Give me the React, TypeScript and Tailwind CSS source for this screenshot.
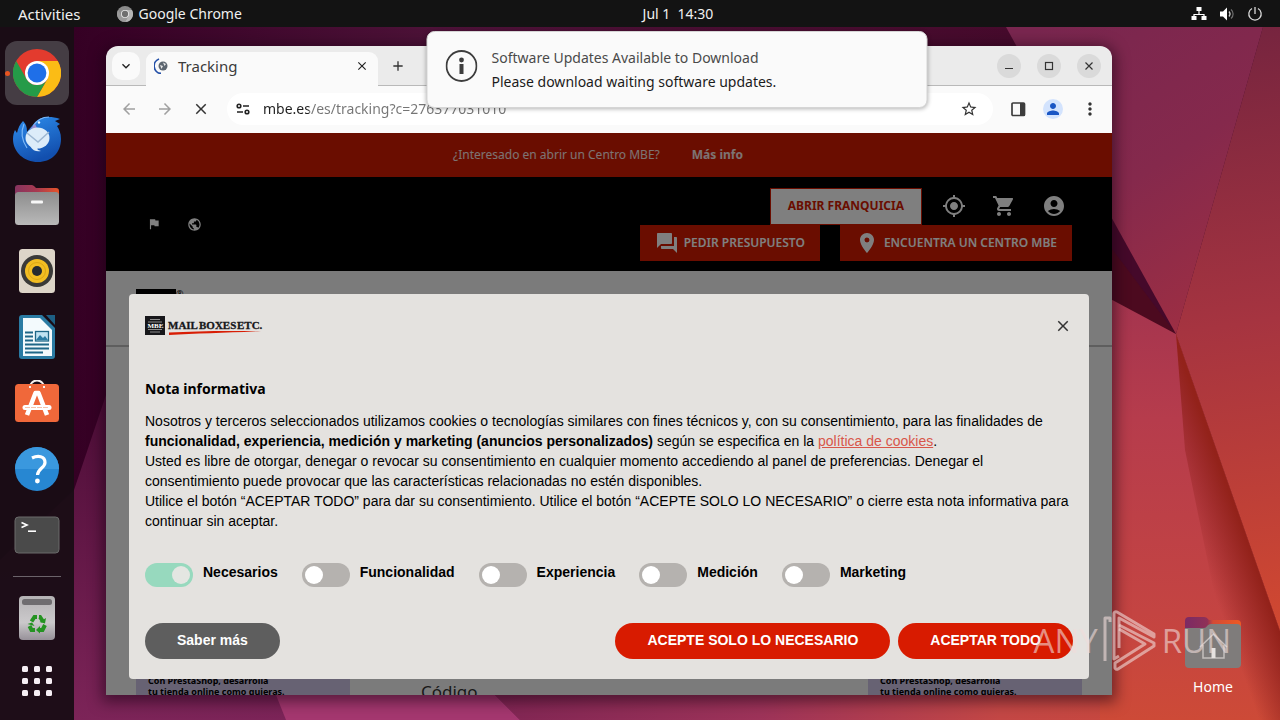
import type { ReactNode } from "react";
import {
  MdAccountCircle,
  MdAdd,
  MdArrowBack,
  MdArrowForward,
  MdClose,
  MdExpandMore,
  MdFlag,
  MdForum,
  MdMoreVert,
  MdMyLocation,
  MdPerson,
  MdPlace,
  MdPublic,
  MdShoppingCart,
  MdStarBorder,
} from "react-icons/md";

function Wallpaper() {
  return (
    <svg
      className="absolute inset-0 h-full w-full"
      viewBox="0 0 1280 720"
      preserveAspectRatio="none"
      aria-hidden="true"
    >
      <defs>
        <linearGradient id="w-top" gradientUnits="userSpaceOnUse" x1="74" y1="0" x2="1100" y2="0">
          <stop offset="0" stopColor="#350024" />
          <stop offset="0.35" stopColor="#4d1238" />
          <stop offset="1" stopColor="#45092a" />
        </linearGradient>
        <linearGradient id="w-left" gradientUnits="userSpaceOnUse" x1="0" y1="380" x2="0" y2="720">
          <stop offset="0" stopColor="#4b0c36" />
          <stop offset="1" stopColor="#7c2458" />
        </linearGradient>
        <linearGradient id="w-bottom" gradientUnits="userSpaceOnUse" x1="480" y1="0" x2="1280" y2="0">
          <stop offset="0" stopColor="#7f2553" />
          <stop offset="0.35" stopColor="#9d3359" />
          <stop offset="0.65" stopColor="#c34745" />
          <stop offset="1" stopColor="#cc4838" />
        </linearGradient>
        <linearGradient id="w-upper" gradientUnits="userSpaceOnUse" x1="1040" y1="27" x2="1230" y2="330">
          <stop offset="0" stopColor="#79264f" />
          <stop offset="0.5" stopColor="#85294c" />
          <stop offset="1" stopColor="#a02f42" />
        </linearGradient>
        <linearGradient id="w-right" gradientUnits="userSpaceOnUse" x1="1200" y1="27" x2="1290" y2="620">
          <stop offset="0" stopColor="#75243f" />
          <stop offset="0.5" stopColor="#a63440" />
          <stop offset="1" stopColor="#d04831" />
        </linearGradient>
        <linearGradient id="w-lower" gradientUnits="userSpaceOnUse" x1="0" y1="290" x2="0" y2="720">
          <stop offset="0" stopColor="#a3344f" />
          <stop offset="0.3" stopColor="#b63c4c" />
          <stop offset="0.75" stopColor="#c44442" />
          <stop offset="1" stopColor="#cd4a37" />
        </linearGradient>
        <linearGradient id="w-fold" gradientUnits="userSpaceOnUse" x1="1198" y1="548" x2="1243" y2="532">
          <stop offset="0" stopColor="#8b1f1c" stopOpacity="0" />
          <stop offset="1" stopColor="#93221a" />
        </linearGradient>
      </defs>
      <rect width="1280" height="720" fill="url(#w-top)" />
      <path d="M0 560 L74 490 L106 395 L600 300 L600 720 L0 720 Z" fill="url(#w-left)" />
      <path d="M266 670 L470 670 L520 720 L286 720 Z" fill="#a4376f" />
      <path d="M470 670 L1176 334 L1280 631 L1280 720 L520 720 Z" fill="url(#w-bottom)" />
      <path d="M1100 278 L1176 334 L1280 631 L1280 720 L1100 720 Z" fill="url(#w-lower)" />
      <path d="M1000 100 L1176 334 L1000 240 Z" fill="#4c0a1f" />
      <path d="M1006 27 L1263 27 L1176 334 Z" fill="url(#w-upper)" />
      <path d="M1263 27 L1280 27 L1280 631 L1176 334 Z" fill="url(#w-right)" />
      <path d="M1176 334 L1280 631 L1280 720 L1240 720 L1185 450 Z" fill="url(#w-fold)" />
    </svg>
  );
}

function ChromeLogo({ mono = false }: { mono?: boolean }) {
  const [red, yellow, green, blue, ring] = mono
    ? ["#8b8b8b", "#b5b5b5", "#9a9a9a", "#6f6f6f", "#e8e8e8"]
    : ["#e33b2e", "#fbbc15", "#259b48", "#1f6fe8", "#ffffff"];
  return (
    <svg viewBox="0 0 48 48" className="h-full w-full" aria-hidden="true">
      <circle cx="24" cy="24" r="24" fill={red} />
      <path d="M24 12 H44.8 A24 24 0 0 1 24 48 L34.4 30 Z" fill={yellow} />
      <path d="M3.2 12 A24 24 0 0 0 24 48 L34.4 30 A12 12 0 0 1 13.6 30 Z" fill={green} />
      <circle cx="24" cy="24" r="12" fill={ring} />
      <circle cx="24" cy="24" r="9.4" fill={blue} />
    </svg>
  );
}

function MailBird() {
  return (
    <svg viewBox="0 0 48 48" className="size-12" aria-hidden="true">
      <defs>
        <linearGradient id="bird" x1="0" y1="0" x2="0.4" y2="1">
          <stop offset="0" stopColor="#2f8fee" />
          <stop offset="1" stopColor="#124fae" />
        </linearGradient>
      </defs>
      <path
        d="M10 6 C13 9 14 12 14 17 C16 14 18 12 20 10 C25 2 35 0 47 4 L42 6 L47 9 L44 11 C46 14 48 18 48 24 C48 38 38 47 25 47 C11 47 0 37 0 24 C0 20 1 17 2 15 L4 18 C5 13 7 9 10 6 Z"
        fill="url(#bird)"
      />
      <path d="M11 9 C8 16 8 24 14 33 M20 11 C24 5 30 2 36 2" stroke="#7cb8f7" strokeWidth="1.2" fill="none" />
      <circle cx="26" cy="7.5" r="1.2" fill="#e7f3ff" />
      <path d="M17 14 L22 9 L24 13 Z" fill="#9b8fd6" />
      <ellipse cx="24.5" cy="23" rx="12" ry="10.5" fill="#dcecf9" />
      <path d="M14 18 L25 27 L36 17" fill="none" stroke="#9db7d2" strokeWidth="1.5" />
      <path d="M17 31 C20 36 24 37 28 36 C24 35 24 34 25 32 Z" fill="#dcecf9" />
    </svg>
  );
}

function FilesIcon() {
  return (
    <svg viewBox="0 0 46 42" className="h-[42px] w-[46px]" aria-hidden="true">
      <defs>
        <linearGradient id="folder-back" x1="0" y1="0" x2="1" y2="0">
          <stop offset="0" stopColor="#86345f" />
          <stop offset="0.5" stopColor="#a83a50" />
          <stop offset="1" stopColor="#e6542a" />
        </linearGradient>
        <linearGradient id="folder-front" x1="0" y1="0" x2="0" y2="1">
          <stop offset="0" stopColor="#8d8d8d" />
          <stop offset="1" stopColor="#b9b9b9" />
        </linearGradient>
      </defs>
      <path d="M1 4 a3 3 0 0 1 3-3 h13 a4 4 0 0 1 3 1 l2 2 h20 a3 3 0 0 1 3 3 v14 H1 Z" fill="url(#folder-back)" />
      <rect x="1" y="8" width="44" height="33" rx="3.5" fill="url(#folder-front)" />
      <rect x="17" y="16.5" width="12" height="3" rx="1" fill="#f7f7f7" />
    </svg>
  );
}

function SpeakerIcon() {
  return (
    <svg viewBox="0 0 38 46" className="h-[46px] w-[38px]" aria-hidden="true">
      <rect x="1" y="1" width="36" height="44" rx="3.5" fill="#ddd5c8" />
      <circle cx="19" cy="23" r="16" fill="#3a3a38" />
      <circle cx="19" cy="23" r="12" fill="#f2bd22" />
      <circle cx="19" cy="23" r="8.5" fill="none" stroke="#dba714" strokeWidth="1" />
      <circle cx="19" cy="23" r="5" fill="#252a30" />
    </svg>
  );
}

function WriterIcon() {
  return (
    <svg viewBox="0 0 38 46" className="h-[46px] w-[38px]" aria-hidden="true">
      <path d="M4 1 H24 L37 14 V42 a3 3 0 0 1 -3 3 H4 a3 3 0 0 1 -3 -3 V4 a3 3 0 0 1 3-3 Z" fill="#2a7ba3" />
      <path d="M28 1 H37 V11 Z" fill="#1d5f83" />
      <path d="M5 4 H22 L34 16 V42 H5 Z" fill="#f3fafd" />
      <path d="M7 18.5 H15 M7 22.5 H15 M7 26.5 H15 M7 30.5 H31 M7 34.5 H31 M7 38.5 H25" stroke="#1f6788" strokeWidth="1.8" />
      <rect x="17.5" y="17.5" width="13" height="9.5" fill="#bfe2f2" stroke="#1f6788" strokeWidth="1.3" />
      <path d="M18 26 L22 21 L25 24 L27 22 L30 26 Z" fill="#2a7ba3" />
    </svg>
  );
}

function SoftwareIcon() {
  return (
    <svg viewBox="0 0 46 46" className="size-[46px]" aria-hidden="true">
      <path d="M16 9 V7 a7 6.5 0 0 1 14 0 V9" fill="none" stroke="#f5f0ec" strokeWidth="2" />
      <rect x="1" y="4" width="44" height="38" rx="3.5" fill="#f0683a" />
      <path d="M16 8 V6 M30 8 V6" stroke="#f5f0ec" strokeWidth="2" />
      <path d="M13 35 L21.5 13 H24.5 L33 35" fill="none" stroke="#fff" strokeWidth="4.5" strokeLinejoin="round" />
      <path d="M11 27.5 H35" stroke="#fff" strokeWidth="5" strokeLinecap="round" />
      <path d="M11 27.5 H35" stroke="#f5b296" strokeWidth="0.8" strokeDasharray="5 1" />
    </svg>
  );
}

function HelpIcon() {
  return (
    <svg viewBox="0 0 46 46" className="size-[46px]" aria-hidden="true">
      <circle cx="23" cy="23" r="22" fill="#2787d2" />
      <path d="M1 23 A22 22 0 0 1 45 23 Z" fill="#3a98de" />
      <path d="M18 12 C24 9 31 10 31 16.5 C31 22 24 22 23.5 29" fill="none" stroke="#fff" strokeWidth="3.2" />
      <circle cx="23.4" cy="35" r="2.4" fill="#fff" />
    </svg>
  );
}

function TerminalIcon() {
  return (
    <svg viewBox="0 0 46 38" className="h-[38px] w-[46px]" aria-hidden="true">
      <rect x="1" y="1" width="44" height="36" rx="3.5" fill="#4a4a4a" stroke="#6b6b6b" />
      <path d="M7.5 6.5 L13 9 L7.5 11.5" fill="none" stroke="#fff" strokeWidth="1.6" />
      <path d="M14 15.2 H22" stroke="#fff" strokeWidth="1.6" />
    </svg>
  );
}

function TrashIcon() {
  return (
    <svg viewBox="0 0 38 46" className="h-[46px] w-[38px]" aria-hidden="true">
      <defs>
        <linearGradient id="bin" x1="0" y1="0" x2="0" y2="1">
          <stop offset="0" stopColor="#b4b2b4" />
          <stop offset="0.6" stopColor="#cbc9cb" />
          <stop offset="1" stopColor="#979199" />
        </linearGradient>
      </defs>
      <rect x="1" y="1" width="36" height="44" rx="4" fill="url(#bin)" />
      <rect x="4" y="4" width="30" height="6" rx="2.5" fill="#6f6d70" />
      <g fill="none" stroke="#259322" strokeWidth="4">
        <path d="M13.5 26.5 L16.5 22 H19" />
        <path d="M21 22 H22 L25 26.5" />
        <path d="M27 30 L24.5 35 H21.5" />
        <path d="M17 35 H13.5 L11.5 31" />
      </g>
      <path d="M28 23 L27 28.5 L21.5 27 Z M22 31 V38.5 L18 35 Z M9.5 29 L14 27.5 L16.5 31 Z" fill="#259322" />
    </svg>
  );
}

function GridIcon() {
  const steps = [0, 12, 24];
  return (
    <svg viewBox="0 0 30 36" className="h-9 w-[30px]" aria-hidden="true">
      {steps.map((y) =>
        steps.map((x) => <rect key={`${x}-${y}`} x={x} y={y} width="6" height="6" rx="1.5" fill="#f6eef4" />),
      )}
    </svg>
  );
}

function DockButton({ label, active = false, children }: { label: string; active?: boolean; children: ReactNode }) {
  return (
    <button
      type="button"
      aria-label={label}
      className={
        active
          ? "relative flex size-16 shrink-0 items-center justify-center rounded-xl bg-[#453d44]"
          : "relative flex size-16 shrink-0 items-center justify-center rounded-xl"
      }
    >
      {active && <span className="absolute left-0 size-[5px] rounded-full bg-[#e95420]" />}
      {children}
    </button>
  );
}

function Dock() {
  return (
    <nav aria-label="Dock" className="flex w-[74px] shrink-0 flex-col items-center gap-[2px] bg-[#190d15]/95 pt-[14px]">
      <DockButton label="Google Chrome" active>
        <span className="size-12">
          <ChromeLogo />
        </span>
      </DockButton>
      <DockButton label="Thunderbird"><MailBird /></DockButton>
      <DockButton label="Files"><FilesIcon /></DockButton>
      <DockButton label="Rhythmbox"><SpeakerIcon /></DockButton>
      <DockButton label="LibreOffice Writer"><WriterIcon /></DockButton>
      <DockButton label="Ubuntu Software"><SoftwareIcon /></DockButton>
      <DockButton label="Help"><HelpIcon /></DockButton>
      <DockButton label="Terminal"><TerminalIcon /></DockButton>
      <hr className="my-[7px] w-12 border-t border-[#6b636a]" />
      <DockButton label="Trash"><TrashIcon /></DockButton>
      <DockButton label="Show Applications"><GridIcon /></DockButton>
    </nav>
  );
}

function TopBar() {
  return (
    <header className="relative grid h-[27px] shrink-0 grid-cols-3 items-center bg-[#131313] text-sm text-[#f0f0f0]">
      <div className="flex items-center pl-[18px]">
        <button type="button" className="text-[15px] leading-5">Activities</button>
        <button type="button" className="ml-9 flex items-center gap-[6px]">
          <span className="size-4">
            <ChromeLogo mono />
          </span>
          Google Chrome
        </button>
      </div>
      <button type="button" className="justify-self-center pl-[76px] whitespace-pre">Jul 1  14:30</button>
      <button type="button" aria-label="System menu" className="mr-[17px] flex items-center gap-3 justify-self-end">
        <svg viewBox="0 0 16 16" className="size-4" aria-hidden="true">
          <path d="M8 4 V8 M3 11 V8.5 H13 V11" fill="none" stroke="#fff" strokeWidth="1.2" />
          <path d="M5.5 1 h5 v4 h-5 Z M0.5 10 h5 v4 h-5 Z M10.5 10 h5 v4 h-5 Z" fill="#fff" />
        </svg>
        <svg viewBox="0 0 16 16" className="size-4" aria-hidden="true">
          <path d="M1 5.5 H4 L8 1.5 V14.5 L4 10.5 H1 Z" fill="#fff" />
          <path d="M10 5.5 C11.3 7 11.3 9 10 10.5" fill="none" stroke="#d0d0d0" strokeWidth="1.2" />
          <path d="M12 3.5 C14.8 6 14.8 10 12 12.5" fill="none" stroke="#6f6f6f" strokeWidth="1.2" />
        </svg>
        <svg viewBox="0 0 16 16" className="size-4" aria-hidden="true">
          <path d="M5 2.5 A6.2 6.2 0 1 0 11 2.5 M8 1 V8" fill="none" stroke="#d9d9d9" strokeWidth="1.3" />
        </svg>
      </button>
    </header>
  );
}

function WindowButton({ label, children }: { label: string; children: ReactNode }) {
  return (
    <button type="button" aria-label={label} className="flex size-6 items-center justify-center rounded-full bg-[#dadada]">
      <svg viewBox="0 0 10 10" className="size-[10px]" fill="none" stroke="#333" strokeWidth="1.2" aria-hidden="true">
        {children}
      </svg>
    </button>
  );
}

function TabStrip() {
  return (
    <div className="flex h-10 shrink-0 items-end border-b border-[#b9b9b9] bg-[#ebebeb] pl-[6px]">
      <button
        type="button"
        aria-label="Search tabs"
        className="mb-[5px] flex size-7 items-center justify-center rounded-[10px] bg-[#fafafa] text-[#222]"
      >
        <MdExpandMore size={16} />
      </button>
      <div className="relative -mb-px ml-[6px] flex h-[34px] w-[232px] items-center rounded-t-[9px] bg-[#fafafa] pr-[9px] pb-[6px] pl-2">
        <svg viewBox="0 0 16 16" className="size-4" aria-hidden="true">
          <path d="M5 1 A7.5 7.5 0 0 0 7 15.5" fill="none" stroke="#2450a8" strokeWidth="1.8" />
          <circle cx="9" cy="8" r="4.5" fill="#5d6670" />
          <path d="M6 7 L9 8 L7.5 11 Z M9 4.5 L12 6 L10.5 8 Z" fill="#e8e8e8" />
        </svg>
        <span className="ml-2 flex-1 text-[15px] leading-5 text-[#3c3c3c]">Tracking</span>
        <button type="button" aria-label="Close tab" className="text-[#222]">
          <MdClose size={14} />
        </button>
      </div>
      <button type="button" aria-label="New tab" className="mb-[11px] ml-3 text-[#333]">
        <MdAdd size={16} />
      </button>
      <div className="mr-[11px] mb-[7px] ml-auto flex gap-4">
        <WindowButton label="Minimize"><path d="M1 7.5 H9" /></WindowButton>
        <WindowButton label="Maximize"><rect x="1.5" y="1.5" width="7" height="7" /></WindowButton>
        <WindowButton label="Close"><path d="M1.5 1.5 L8.5 8.5 M8.5 1.5 L1.5 8.5" /></WindowButton>
      </div>
    </div>
  );
}

function Toolbar() {
  return (
    <div className="flex h-[47px] shrink-0 items-center bg-[#fafafa] pr-3 pb-px pl-[14px] text-[#333]">
      <div className="flex gap-[18px]">
        <button type="button" aria-label="Back" className="text-[#a0a0a0]"><MdArrowBack size={18} /></button>
        <button type="button" aria-label="Forward" className="text-[#a0a0a0]"><MdArrowForward size={18} /></button>
        <button type="button" aria-label="Stop loading"><MdClose size={18} /></button>
      </div>
      <div className="ml-[17px] flex h-8 flex-1 items-center rounded-full bg-white pr-[15px] pl-2">
        <svg viewBox="0 0 16 16" className="size-4" fill="none" stroke="#222" strokeWidth="1.6" aria-hidden="true">
          <circle cx="4" cy="5" r="1.8" />
          <path d="M8 5 H14 M2 11 H8" />
          <circle cx="12" cy="11" r="1.8" />
        </svg>
        <input
          aria-label="Address"
          type="text"
          defaultValue="mbe.es/es/tracking?c=276377031010"
          className="ml-3 min-w-0 flex-1 bg-[linear-gradient(90deg,#1f1f1f_46px,#757575_46px)] bg-clip-text text-sm text-transparent outline-none"
        />
        <button type="button" aria-label="Bookmark"><MdStarBorder size={18} /></button>
      </div>
      <div className="ml-[17px] flex items-center gap-[17px]">
        <button type="button" aria-label="Side panel">
          <svg viewBox="0 0 16 16" className="size-4" aria-hidden="true">
            <rect x="2" y="2" width="12.5" height="12.5" rx="1" fill="none" stroke="#3c3c3c" strokeWidth="1.7" />
            <path d="M10 2 H14.5 V14.5 H10 Z" fill="#3c3c3c" />
          </svg>
        </button>
        <button
          type="button"
          aria-label="Profile"
          className="flex size-5 items-center justify-center rounded-full bg-[#d3e3fd] text-[#1a56c4]"
        >
          <MdPerson size={18} />
        </button>
        <button type="button" aria-label="Menu"><MdMoreVert size={20} /></button>
      </div>
    </div>
  );
}

function PromoCard() {
  return (
    <aside className="bg-[#cfc5e6] px-3 pt-[328px] pb-4 text-[9px] leading-[11px] font-bold text-black">
      Con PrestaShop, desarrolla
      <br />
      tu tienda online como quieras.
    </aside>
  );
}

function SitePage() {
  return (
    <div className="bg-[#f6f6f6]">
      <div className="flex h-11 items-center justify-center gap-8 bg-[#d41a00] pr-[22px] text-xs text-white/90">
        <span>¿Interesado en abrir un Centro MBE?</span>
        <a href="#info" className="font-bold">Más info</a>
      </div>
      <div className="flex h-[94px] items-center justify-between bg-black px-10 text-white">
        <div className="flex gap-[26px] pl-px">
          <button type="button" aria-label="Country"><MdFlag size={14} /></button>
          <button type="button" aria-label="Language"><MdPublic size={15} /></button>
        </div>
        <div className="flex flex-col items-end text-xs font-semibold">
          <div className="flex items-center">
            <a href="#franquicia" className="flex h-[37px] items-center border border-[#d41a00] bg-white px-[17px] font-bold text-[#d41a00]">
              ABRIR FRANQUICIA
            </a>
            <div className="mr-[6px] ml-5 flex gap-[26px]">
              <button type="button" aria-label="Location"><MdMyLocation size={24} /></button>
              <button type="button" aria-label="Cart"><MdShoppingCart size={24} /></button>
              <button type="button" aria-label="Account"><MdAccountCircle size={24} /></button>
            </div>
          </div>
          <div className="flex gap-5">
            <a href="#presupuesto" className="flex h-9 items-center gap-[5px] bg-[#d41a00] px-[15px]">
              <MdForum size={24} />
              PEDIR PRESUPUESTO
            </a>
            <a href="#centros" className="flex h-9 items-center gap-[5px] bg-[#d41a00] px-[15px]">
              <MdPlace size={24} />
              ENCUENTRA UN CENTRO MBE
            </a>
          </div>
        </div>
      </div>
      <div className="flex h-[76px] items-start border-b-2 border-[#bdbdbd] px-[30px] pt-[18px]">
        <span className="h-10 w-10 bg-black" />
        <span className="text-[9px] leading-[9px] text-black">®</span>
      </div>
      <div className="grid grid-cols-[214px_1fr_214px] px-[30px]">
        <PromoCard />
        <label htmlFor="codigo" className="pt-[333px] pl-[71px] text-[17px] leading-6 text-[#333]">Código</label>
        <PromoCard />
      </div>
    </div>
  );
}

function MbeLogo() {
  return (
    <svg viewBox="0 0 118 22" className="h-[22px] w-[118px]" role="img" aria-label="Mail Boxes Etc.">
      <rect x="0" y="1" width="20" height="19" fill="#17171a" />
      <path d="M5 4.5 H15 M3 7 H17 M3 14.5 H17 M5 17 H15" stroke="#8c8c8c" strokeWidth="1" />
      <text x="2.5" y="13" fontFamily="Liberation Serif, serif" fontWeight="700" fontSize="7" fill="#fff">MBE</text>
      <g fontFamily="Liberation Serif, serif" fontWeight="700" fontSize="11" fill="#17171a" stroke="#17171a" strokeWidth="0.3">
        <text x="23" y="14">MAIL</text>
        <text x="54" y="14">BOXES</text>
        <text x="92" y="14">ETC.</text>
      </g>
      <path d="M24 17.5 C50 16.2 80 15.5 116 16.3 C84 17.6 50 18.5 24 20 Z" fill="#d81e05" />
    </svg>
  );
}

const preferences = [
  { id: "necesarios", label: "Necesarios", on: true },
  { id: "funcionalidad", label: "Funcionalidad", on: false },
  { id: "experiencia", label: "Experiencia", on: false },
  { id: "medicion", label: "Medición", on: false },
  { id: "marketing", label: "Marketing", on: false },
];

function CookieDialog() {
  return (
    <section
      role="dialog"
      aria-label="Nota informativa"
      className="w-full max-w-[960px] rounded bg-[#e4e2df] p-4 font-['Liberation_Sans',Arial,sans-serif] text-sm leading-5 text-black"
    >
      <div className="flex h-8 items-center justify-between pr-px">
        <MbeLogo />
        <button type="button" aria-label="Cerrar" className="text-[#333]"><MdClose size={18} /></button>
      </div>
      <h2 className="mt-9 font-['Noto_Sans',sans-serif] text-sm leading-[22px] font-bold">Nota informativa</h2>
      <div className="mt-[11px]">
        <p>
          Nosotros y terceros seleccionados utilizamos cookies o tecnologías similares con fines técnicos y, con su
          consentimiento, para las finalidades de{" "}
          <strong>funcionalidad, experiencia, medición y marketing (anuncios personalizados)</strong> según se
          especifica en la <a href="#cookies" className="text-[#d8564a] underline">política de cookies</a>.
        </p>
        <p>
          Usted es libre de otorgar, denegar o revocar su consentimiento en cualquier momento accediendo al panel de
          preferencias. Denegar el consentimiento puede provocar que las características relacionadas no estén
          disponibles.
        </p>
        <p>
          Utilice el botón “ACEPTAR TODO” para dar su consentimiento. Utilice el botón “ACEPTE SOLO LO NECESARIO” o
          cierre esta nota informativa para continuar sin aceptar.
        </p>
      </div>
      <div className="mt-8 flex flex-wrap gap-6">
        {preferences.map((item) => (
          <div key={item.id} className="flex gap-[10px]">
            <input
              id={item.id}
              type="checkbox"
              defaultChecked={item.on}
              disabled={item.on}
              className="flex h-6 w-12 appearance-none items-center rounded-full bg-[#b5b2af] px-[3px] before:size-[18px] before:rounded-full before:bg-white before:content-[''] checked:justify-end checked:bg-[#97d9be] checked:before:bg-[#e4e6e2]"
            />
            <label htmlFor={item.id} className="leading-[18px] font-bold">{item.label}</label>
          </div>
        ))}
      </div>
      <div className="mt-9 flex gap-2 pb-1 font-bold text-white">
        <button type="button" className="mr-auto h-9 rounded-full bg-[#5e5e5e] px-8 pb-[2px]">Saber más</button>
        <button type="button" className="h-9 rounded-full bg-[#d81b00] px-8 pb-[2px]">ACEPTE SOLO LO NECESARIO</button>
        <button type="button" className="h-9 rounded-full bg-[#d81b00] px-8 pb-[2px]">ACEPTAR TODO</button>
      </div>
    </section>
  );
}

function BrowserWindow() {
  return (
    <main className="relative flex min-w-0 flex-1 flex-col overflow-hidden rounded-t-xl shadow-[0_3px_14px_4px_rgba(20,0,15,0.5)]">
      <TabStrip />
      <Toolbar />
      <div className="relative min-h-0 flex-1 overflow-hidden">
        <SitePage />
        <div className="absolute inset-0 flex items-end justify-center bg-black/50 px-[23px] pb-4">
          <CookieDialog />
        </div>
      </div>
    </main>
  );
}

function Notification() {
  return (
    <div
      role="status"
      className="absolute top-1 left-1/2 flex w-[501px] -translate-x-1/2 gap-[14px] rounded-lg border border-[#d5d5d5] bg-[#fafafa] px-[18px] pt-[14px] pb-[13px] text-sm leading-6 shadow-[0_1px_4px_rgba(0,0,0,0.3)]"
    >
      <svg viewBox="0 0 32 32" className="mt-1 size-8 shrink-0" aria-hidden="true">
        <circle cx="16" cy="16" r="15" fill="none" stroke="#3d3d3d" strokeWidth="1.8" />
        <circle cx="16" cy="10" r="2.4" fill="#3d3d3d" />
        <rect x="14" y="14" width="4" height="10" fill="#3d3d3d" />
      </svg>
      <div>
        <p className="text-[#4a4a4a]">Software Updates Available to Download</p>
        <p className="text-[#1c1c1c]">Please download waiting software updates.</p>
      </div>
    </div>
  );
}

function HomeFolder() {
  return (
    <button type="button" className="absolute right-[38px] bottom-[22px] flex w-[58px] flex-col items-center gap-[7px] text-sm leading-[22px] text-white">
      <svg viewBox="0 0 58 52" className="h-[52px] w-[58px]" aria-hidden="true">
        <defs>
          <linearGradient id="home-back" x1="0" y1="0" x2="1" y2="0">
            <stop offset="0" stopColor="#7b2a64" />
            <stop offset="0.4" stopColor="#8f3157" />
            <stop offset="0.5" stopColor="#d34a35" />
            <stop offset="1" stopColor="#ee5a24" />
          </linearGradient>
        </defs>
        <path d="M1 4 a4 4 0 0 1 4-4 h15 a5 5 0 0 1 4 2 l1 1 h28 a4 4 0 0 1 4 4 v14 H1 Z" fill="url(#home-back)" />
        <path d="M1 11 H20 C23 11 23 7 27 7 H53 a4 4 0 0 1 4 4 V47 a4 4 0 0 1 -4 4 H5 a4 4 0 0 1 -4 -4 Z" fill="#7f7c7b" />
        <path d="M16 30 L29.5 17 L43 30 M19 28 V41 H40 V28" fill="none" stroke="#c4bfbd" strokeWidth="1.5" />
        <rect x="27.5" y="31" width="4" height="10" fill="#e6e2e0" />
      </svg>
      Home
    </button>
  );
}

function Watermark() {
  return (
    <div className="pointer-events-none absolute right-[49px] bottom-12 flex items-center gap-[5px] font-['Liberation_Sans_Narrow','Open_Sans',sans-serif] text-[33px] leading-[62px] font-normal text-[#f0dcda]/60">
      <span>ANY</span>
      <svg
        viewBox="0 0 54 62"
        className="h-[62px] w-[54px] shrink-0"
        fill="none"
        stroke="currentColor"
        strokeWidth="3"
        strokeLinejoin="round"
        aria-hidden="true"
      >
        <path d="M7 12 V8 H2 V51" />
        <path d="M16 46 L11 49 V4 a2 2 0 0 1 3 -2 L51 24 V27 L16 8 V38" />
        <path d="M16 15 L51 33 V36 L15 59 a2 2 0 0 1 -3 -1 V53 L42 34 L16 19" />
      </svg>
      <span>RUN</span>
    </div>
  );
}

export default function App() {
  return (
    <div className="relative flex h-screen flex-col overflow-hidden bg-[#350024] font-['Noto_Sans','Open_Sans',sans-serif]">
      <Wallpaper />
      <TopBar />
      <div className="relative flex min-h-0 flex-1">
        <Dock />
        <div className="relative flex min-w-0 flex-1 pt-[19px] pr-[168px] pb-[25px] pl-8">
          <BrowserWindow />
          <Notification />
          <HomeFolder />
          <Watermark />
        </div>
      </div>
    </div>
  );
}
